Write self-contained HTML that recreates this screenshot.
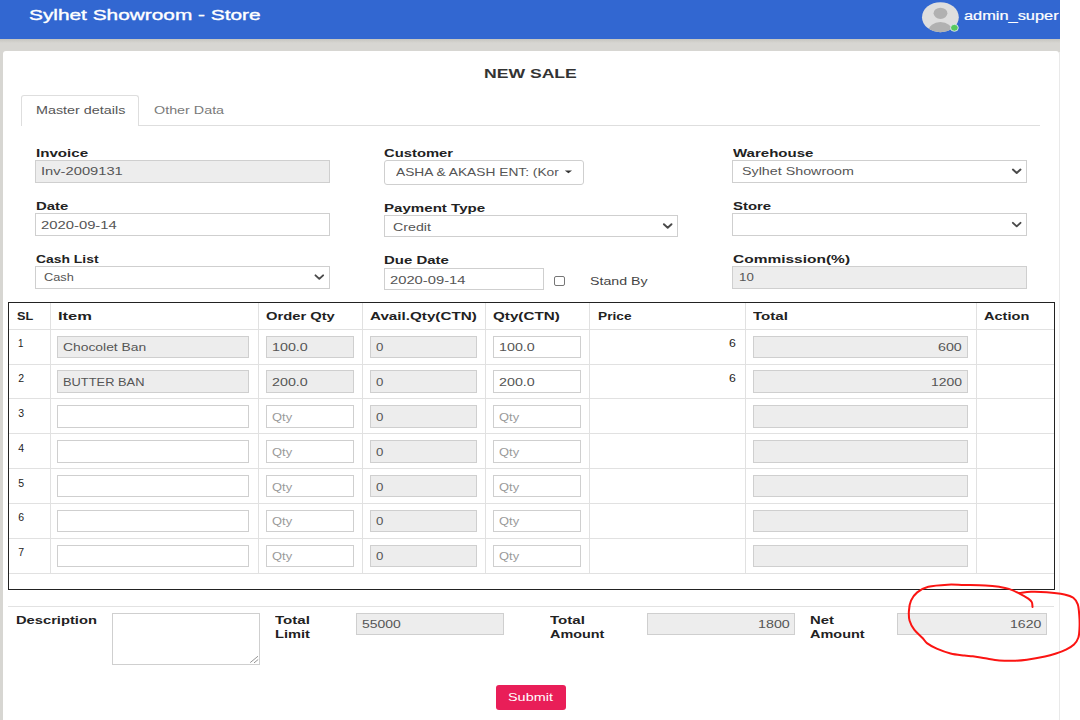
<!DOCTYPE html>
<html lang="en"><head><meta charset="utf-8"><title>New Sale - Sylhet Showroom - Store</title>
<style>
html,body{margin:0;padding:0;}
body{width:1080px;height:720px;position:relative;overflow:hidden;background:#fff;font-family:"Liberation Sans",sans-serif;}
.b{position:absolute;box-sizing:border-box;}
.t{position:absolute;white-space:nowrap;line-height:20px;height:20px;transform-origin:0 0;display:block;}
svg{position:absolute;left:0;top:0;}
</style></head><body>
<div class="b" style="left:0.00px;top:0.00px;width:1060.00px;height:720.00px;background:#d7d6d2;"></div>
<div class="b" style="left:0.00px;top:0.00px;width:1060.00px;height:39.00px;background:#3267d1;"></div>
<div class="b" style="left:0.00px;top:39.00px;width:1060.00px;height:4.00px;background:linear-gradient(#c6c5c0,#d7d6d2);"></div>
<div class="b" style="left:3.00px;top:51.00px;width:1056.00px;height:669.00px;background:#fff;border-radius:3px 3px 0 0;"></div>
<div class="b" style="left:1059.00px;top:52.00px;width:1.00px;height:668.00px;background:#e9e9e9;"></div>
<div class="b" style="left:21.00px;top:125.00px;width:1019.00px;height:1.00px;background:#dedede;"></div>
<div class="b" style="left:21.00px;top:95.00px;width:118.00px;height:31.00px;background:#fff;border:1px solid #dedede;border-bottom:none;border-radius:3px 3px 0 0;"></div>
<div class="b" style="left:35.00px;top:160.00px;width:294.60px;height:23.00px;background:#ededed;border:1px solid #cfcfcf;border-radius:0px;"></div>
<div class="b" style="left:35.00px;top:213.00px;width:294.60px;height:23.00px;background:#fff;border:1px solid #cfcfcf;border-radius:0px;"></div>
<div class="b" style="left:35.00px;top:266.00px;width:294.60px;height:23.00px;background:#fff;border:1px solid #cfcfcf;border-radius:0px;"></div>
<div class="b" style="left:384.00px;top:160.00px;width:200.40px;height:25.00px;background:#fff;border:1px solid #cfcfcf;border-radius:3px;"></div>
<div class="b" style="left:384.00px;top:215.00px;width:293.70px;height:21.70px;background:#fff;border:1px solid #cfcfcf;border-radius:0px;"></div>
<div class="b" style="left:384.00px;top:268.30px;width:160.30px;height:21.70px;background:#fff;border:1px solid #cfcfcf;border-radius:0px;"></div>
<div class="b" style="left:732.30px;top:160.00px;width:294.30px;height:23.00px;background:#fff;border:1px solid #cfcfcf;border-radius:0px;"></div>
<div class="b" style="left:732.30px;top:213.00px;width:294.30px;height:23.00px;background:#fff;border:1px solid #cfcfcf;border-radius:0px;"></div>
<div class="b" style="left:732.30px;top:266.00px;width:294.30px;height:23.00px;background:#ededed;border:1px solid #cfcfcf;border-radius:0px;"></div>
<div class="b" style="left:554.30px;top:276.00px;width:10.40px;height:9.50px;background:#fff;border:1px solid #767676;border-radius:2px;"></div>
<div class="b" style="left:8.00px;top:302.00px;width:1046.50px;height:287.50px;border:1.3px solid #222;"></div>
<div class="b" style="left:9.00px;top:328.70px;width:1044.50px;height:1.00px;background:#e1e1e1;"></div>
<div class="b" style="left:9.00px;top:363.55px;width:1044.50px;height:1.00px;background:#e1e1e1;"></div>
<div class="b" style="left:9.00px;top:398.40px;width:1044.50px;height:1.00px;background:#e1e1e1;"></div>
<div class="b" style="left:9.00px;top:433.25px;width:1044.50px;height:1.00px;background:#e1e1e1;"></div>
<div class="b" style="left:9.00px;top:468.10px;width:1044.50px;height:1.00px;background:#e1e1e1;"></div>
<div class="b" style="left:9.00px;top:502.95px;width:1044.50px;height:1.00px;background:#e1e1e1;"></div>
<div class="b" style="left:9.00px;top:537.80px;width:1044.50px;height:1.00px;background:#e1e1e1;"></div>
<div class="b" style="left:9.00px;top:572.65px;width:1044.50px;height:1.00px;background:#e1e1e1;"></div>
<div class="b" style="left:49.50px;top:303.00px;width:1.00px;height:271.00px;background:#e1e1e1;"></div>
<div class="b" style="left:257.80px;top:303.00px;width:1.00px;height:271.00px;background:#e1e1e1;"></div>
<div class="b" style="left:361.80px;top:303.00px;width:1.00px;height:271.00px;background:#e1e1e1;"></div>
<div class="b" style="left:485.20px;top:303.00px;width:1.00px;height:271.00px;background:#e1e1e1;"></div>
<div class="b" style="left:588.80px;top:303.00px;width:1.00px;height:271.00px;background:#e1e1e1;"></div>
<div class="b" style="left:744.50px;top:303.00px;width:1.00px;height:271.00px;background:#e1e1e1;"></div>
<div class="b" style="left:976.20px;top:303.00px;width:1.00px;height:271.00px;background:#e1e1e1;"></div>
<div class="b" style="left:57.30px;top:335.60px;width:192.00px;height:22.40px;background:#ededed;border:1px solid #cfcfcf;border-radius:0px;"></div>
<div class="b" style="left:266.00px;top:335.60px;width:88.00px;height:22.40px;background:#ededed;border:1px solid #cfcfcf;border-radius:0px;"></div>
<div class="b" style="left:370.00px;top:335.60px;width:106.70px;height:22.40px;background:#ededed;border:1px solid #cfcfcf;border-radius:0px;"></div>
<div class="b" style="left:493.30px;top:335.60px;width:87.40px;height:22.40px;background:#fff;border:1px solid #cfcfcf;border-radius:0px;"></div>
<div class="b" style="left:752.70px;top:335.60px;width:215.00px;height:22.40px;background:#ededed;border:1px solid #cfcfcf;border-radius:0px;"></div>
<div class="b" style="left:57.30px;top:370.45px;width:192.00px;height:22.40px;background:#ededed;border:1px solid #cfcfcf;border-radius:0px;"></div>
<div class="b" style="left:266.00px;top:370.45px;width:88.00px;height:22.40px;background:#ededed;border:1px solid #cfcfcf;border-radius:0px;"></div>
<div class="b" style="left:370.00px;top:370.45px;width:106.70px;height:22.40px;background:#ededed;border:1px solid #cfcfcf;border-radius:0px;"></div>
<div class="b" style="left:493.30px;top:370.45px;width:87.40px;height:22.40px;background:#fff;border:1px solid #cfcfcf;border-radius:0px;"></div>
<div class="b" style="left:752.70px;top:370.45px;width:215.00px;height:22.40px;background:#ededed;border:1px solid #cfcfcf;border-radius:0px;"></div>
<div class="b" style="left:57.30px;top:405.30px;width:192.00px;height:22.40px;background:#fff;border:1px solid #cfcfcf;border-radius:0px;"></div>
<div class="b" style="left:266.00px;top:405.30px;width:88.00px;height:22.40px;background:#fff;border:1px solid #cfcfcf;border-radius:0px;"></div>
<div class="b" style="left:370.00px;top:405.30px;width:106.70px;height:22.40px;background:#ededed;border:1px solid #cfcfcf;border-radius:0px;"></div>
<div class="b" style="left:493.30px;top:405.30px;width:87.40px;height:22.40px;background:#fff;border:1px solid #cfcfcf;border-radius:0px;"></div>
<div class="b" style="left:752.70px;top:405.30px;width:215.00px;height:22.40px;background:#ededed;border:1px solid #cfcfcf;border-radius:0px;"></div>
<div class="b" style="left:57.30px;top:440.15px;width:192.00px;height:22.40px;background:#fff;border:1px solid #cfcfcf;border-radius:0px;"></div>
<div class="b" style="left:266.00px;top:440.15px;width:88.00px;height:22.40px;background:#fff;border:1px solid #cfcfcf;border-radius:0px;"></div>
<div class="b" style="left:370.00px;top:440.15px;width:106.70px;height:22.40px;background:#ededed;border:1px solid #cfcfcf;border-radius:0px;"></div>
<div class="b" style="left:493.30px;top:440.15px;width:87.40px;height:22.40px;background:#fff;border:1px solid #cfcfcf;border-radius:0px;"></div>
<div class="b" style="left:752.70px;top:440.15px;width:215.00px;height:22.40px;background:#ededed;border:1px solid #cfcfcf;border-radius:0px;"></div>
<div class="b" style="left:57.30px;top:475.00px;width:192.00px;height:22.40px;background:#fff;border:1px solid #cfcfcf;border-radius:0px;"></div>
<div class="b" style="left:266.00px;top:475.00px;width:88.00px;height:22.40px;background:#fff;border:1px solid #cfcfcf;border-radius:0px;"></div>
<div class="b" style="left:370.00px;top:475.00px;width:106.70px;height:22.40px;background:#ededed;border:1px solid #cfcfcf;border-radius:0px;"></div>
<div class="b" style="left:493.30px;top:475.00px;width:87.40px;height:22.40px;background:#fff;border:1px solid #cfcfcf;border-radius:0px;"></div>
<div class="b" style="left:752.70px;top:475.00px;width:215.00px;height:22.40px;background:#ededed;border:1px solid #cfcfcf;border-radius:0px;"></div>
<div class="b" style="left:57.30px;top:509.85px;width:192.00px;height:22.40px;background:#fff;border:1px solid #cfcfcf;border-radius:0px;"></div>
<div class="b" style="left:266.00px;top:509.85px;width:88.00px;height:22.40px;background:#fff;border:1px solid #cfcfcf;border-radius:0px;"></div>
<div class="b" style="left:370.00px;top:509.85px;width:106.70px;height:22.40px;background:#ededed;border:1px solid #cfcfcf;border-radius:0px;"></div>
<div class="b" style="left:493.30px;top:509.85px;width:87.40px;height:22.40px;background:#fff;border:1px solid #cfcfcf;border-radius:0px;"></div>
<div class="b" style="left:752.70px;top:509.85px;width:215.00px;height:22.40px;background:#ededed;border:1px solid #cfcfcf;border-radius:0px;"></div>
<div class="b" style="left:57.30px;top:544.70px;width:192.00px;height:22.40px;background:#fff;border:1px solid #cfcfcf;border-radius:0px;"></div>
<div class="b" style="left:266.00px;top:544.70px;width:88.00px;height:22.40px;background:#fff;border:1px solid #cfcfcf;border-radius:0px;"></div>
<div class="b" style="left:370.00px;top:544.70px;width:106.70px;height:22.40px;background:#ededed;border:1px solid #cfcfcf;border-radius:0px;"></div>
<div class="b" style="left:493.30px;top:544.70px;width:87.40px;height:22.40px;background:#fff;border:1px solid #cfcfcf;border-radius:0px;"></div>
<div class="b" style="left:752.70px;top:544.70px;width:215.00px;height:22.40px;background:#ededed;border:1px solid #cfcfcf;border-radius:0px;"></div>
<div class="b" style="left:8.00px;top:606.00px;width:1046.00px;height:1.00px;background:#e2e2e2;"></div>
<div class="b" style="left:112.30px;top:613.30px;width:147.70px;height:51.30px;background:#fff;border:1px solid #cfcfcf;border-radius:0px;"></div>
<div class="b" style="left:355.70px;top:613.30px;width:148.30px;height:21.70px;background:#ededed;border:1px solid #cfcfcf;border-radius:0px;"></div>
<div class="b" style="left:646.60px;top:613.30px;width:148.20px;height:21.70px;background:#ededed;border:1px solid #cfcfcf;border-radius:0px;"></div>
<div class="b" style="left:897.20px;top:613.30px;width:149.80px;height:21.70px;background:#ededed;border:1px solid #cfcfcf;border-radius:0px;"></div>
<div class="b" style="left:496.00px;top:685.00px;width:69.70px;height:25.00px;background:#e91e58;border-radius:3px;"></div>
<span class="t" style="left:29.00px;top:4.78px;font-size:14.5px;font-weight:400;color:#fff;transform:scaleX(1.4369);-webkit-text-stroke:0.35px #fff;">Sylhet Showroom - Store</span>
<span class="t" style="left:963.80px;top:6.34px;font-size:12px;font-weight:400;color:#fff;transform:scaleX(1.3637);-webkit-text-stroke:0.2px #fff;">admin_super</span>
<span class="t" style="left:484.40px;top:63.90px;font-size:13px;font-weight:700;color:#333;transform:scaleX(1.3533);">NEW SALE</span>
<span class="t" style="left:36.00px;top:100.36px;font-size:10.5px;font-weight:400;color:#555;transform:scaleX(1.3670);">Master details</span>
<span class="t" style="left:154.40px;top:100.36px;font-size:10.5px;font-weight:400;color:#7a7a7a;transform:scaleX(1.3646);">Other Data</span>
<span class="t" style="left:35.80px;top:143.06px;font-size:10.5px;font-weight:700;color:#222;transform:scaleX(1.4419);">Invoice</span>
<span class="t" style="left:35.80px;top:196.36px;font-size:10.5px;font-weight:700;color:#222;transform:scaleX(1.4180);">Date</span>
<span class="t" style="left:35.80px;top:249.06px;font-size:10.5px;font-weight:700;color:#222;transform:scaleX(1.3232);">Cash List</span>
<span class="t" style="left:384.30px;top:143.06px;font-size:10.5px;font-weight:700;color:#222;transform:scaleX(1.4104);">Customer</span>
<span class="t" style="left:384.30px;top:198.06px;font-size:10.5px;font-weight:700;color:#222;transform:scaleX(1.4368);">Payment Type</span>
<span class="t" style="left:384.30px;top:250.36px;font-size:10.5px;font-weight:700;color:#222;transform:scaleX(1.4232);">Due Date</span>
<span class="t" style="left:732.70px;top:143.06px;font-size:10.5px;font-weight:700;color:#222;transform:scaleX(1.4299);">Warehouse</span>
<span class="t" style="left:732.70px;top:196.36px;font-size:10.5px;font-weight:700;color:#222;transform:scaleX(1.4185);">Store</span>
<span class="t" style="left:732.70px;top:249.06px;font-size:10.5px;font-weight:700;color:#222;transform:scaleX(1.4751);">Commission(%)</span>
<span class="t" style="left:41.20px;top:161.36px;font-size:10.5px;font-weight:400;color:#555;transform:scaleX(1.4007);">Inv-2009131</span>
<span class="t" style="left:40.70px;top:214.66px;font-size:10.5px;font-weight:400;color:#555;transform:scaleX(1.4108);">2020-09-14</span>
<span class="t" style="left:44.00px;top:267.06px;font-size:10.5px;font-weight:400;color:#555;transform:scaleX(1.2159);">Cash</span>
<span class="t" style="left:396.00px;top:162.06px;font-size:10.5px;font-weight:400;color:#555;transform:scaleX(1.3100);">ASHA &amp; AKASH ENT: (Kor</span>
<span class="t" style="left:392.70px;top:217.06px;font-size:10.5px;font-weight:400;color:#555;transform:scaleX(1.3527);">Credit</span>
<span class="t" style="left:390.00px;top:270.36px;font-size:10.5px;font-weight:400;color:#555;transform:scaleX(1.4052);">2020-09-14</span>
<span class="t" style="left:589.80px;top:271.36px;font-size:10.5px;font-weight:400;color:#444;transform:scaleX(1.3492);">Stand By</span>
<span class="t" style="left:741.70px;top:161.36px;font-size:10.5px;font-weight:400;color:#555;transform:scaleX(1.3605);">Sylhet Showroom</span>
<span class="t" style="left:739.30px;top:267.06px;font-size:10.5px;font-weight:400;color:#555;transform:scaleX(1.2669);">10</span>
<span class="t" style="left:17.20px;top:306.36px;font-size:10.5px;font-weight:700;color:#222;transform:scaleX(1.2068);">SL</span>
<span class="t" style="left:58.30px;top:306.36px;font-size:10.5px;font-weight:700;color:#222;transform:scaleX(1.5715);">Item</span>
<span class="t" style="left:266.00px;top:306.36px;font-size:10.5px;font-weight:700;color:#222;transform:scaleX(1.4032);">Order Qty</span>
<span class="t" style="left:370.00px;top:306.36px;font-size:10.5px;font-weight:700;color:#222;transform:scaleX(1.4480);">Avail.Qty(CTN)</span>
<span class="t" style="left:493.30px;top:306.36px;font-size:10.5px;font-weight:700;color:#222;transform:scaleX(1.4480);">Qty(CTN)</span>
<span class="t" style="left:597.80px;top:306.36px;font-size:10.5px;font-weight:700;color:#222;transform:scaleX(1.3039);">Price</span>
<span class="t" style="left:752.70px;top:306.36px;font-size:10.5px;font-weight:700;color:#222;transform:scaleX(1.4353);">Total</span>
<span class="t" style="left:984.30px;top:306.36px;font-size:10.5px;font-weight:700;color:#222;transform:scaleX(1.3860);">Action</span>
<span class="t" style="left:18.30px;top:333.16px;font-size:10.5px;font-weight:400;color:#222;transform:scaleX(0.9333);">1</span>
<span class="t" style="left:63.30px;top:337.16px;font-size:10.5px;font-weight:400;color:#555;transform:scaleX(1.3196);">Chocolet Ban</span>
<span class="t" style="left:271.70px;top:337.16px;font-size:10.5px;font-weight:400;color:#555;transform:scaleX(1.3618);">100.0</span>
<span class="t" style="left:499.00px;top:337.16px;font-size:10.5px;font-weight:400;color:#555;transform:scaleX(1.3618);">100.0</span>
<span class="t" style="left:729.00px;top:333.16px;font-size:10.5px;font-weight:400;color:#222;transform:scaleX(1.1667);">6</span>
<span class="t" style="left:938.30px;top:337.16px;font-size:10.5px;font-weight:400;color:#555;transform:scaleX(1.3575);">600</span>
<span class="t" style="left:375.70px;top:337.16px;font-size:10.5px;font-weight:400;color:#555;transform:scaleX(1.2667);">0</span>
<span class="t" style="left:18.30px;top:368.01px;font-size:10.5px;font-weight:400;color:#222;transform:scaleX(1.0000);">2</span>
<span class="t" style="left:63.30px;top:372.01px;font-size:10.5px;font-weight:400;color:#555;transform:scaleX(1.2241);">BUTTER BAN</span>
<span class="t" style="left:271.70px;top:372.01px;font-size:10.5px;font-weight:400;color:#555;transform:scaleX(1.3618);">200.0</span>
<span class="t" style="left:499.00px;top:372.01px;font-size:10.5px;font-weight:400;color:#555;transform:scaleX(1.3618);">200.0</span>
<span class="t" style="left:729.00px;top:368.01px;font-size:10.5px;font-weight:400;color:#222;transform:scaleX(1.1667);">6</span>
<span class="t" style="left:931.00px;top:372.01px;font-size:10.5px;font-weight:400;color:#555;transform:scaleX(1.3309);">1200</span>
<span class="t" style="left:375.70px;top:372.01px;font-size:10.5px;font-weight:400;color:#555;transform:scaleX(1.2667);">0</span>
<span class="t" style="left:18.30px;top:402.86px;font-size:10.5px;font-weight:400;color:#222;transform:scaleX(1.0000);">3</span>
<span class="t" style="left:271.70px;top:406.86px;font-size:10.5px;font-weight:400;color:#9a9a9a;transform:scaleX(1.2292);">Qty</span>
<span class="t" style="left:499.00px;top:406.86px;font-size:10.5px;font-weight:400;color:#9a9a9a;transform:scaleX(1.2292);">Qty</span>
<span class="t" style="left:375.70px;top:406.86px;font-size:10.5px;font-weight:400;color:#555;transform:scaleX(1.2667);">0</span>
<span class="t" style="left:18.30px;top:437.71px;font-size:10.5px;font-weight:400;color:#222;transform:scaleX(1.0000);">4</span>
<span class="t" style="left:271.70px;top:441.71px;font-size:10.5px;font-weight:400;color:#9a9a9a;transform:scaleX(1.2292);">Qty</span>
<span class="t" style="left:499.00px;top:441.71px;font-size:10.5px;font-weight:400;color:#9a9a9a;transform:scaleX(1.2292);">Qty</span>
<span class="t" style="left:375.70px;top:441.71px;font-size:10.5px;font-weight:400;color:#555;transform:scaleX(1.2667);">0</span>
<span class="t" style="left:18.30px;top:472.56px;font-size:10.5px;font-weight:400;color:#222;transform:scaleX(1.0000);">5</span>
<span class="t" style="left:271.70px;top:476.56px;font-size:10.5px;font-weight:400;color:#9a9a9a;transform:scaleX(1.2292);">Qty</span>
<span class="t" style="left:499.00px;top:476.56px;font-size:10.5px;font-weight:400;color:#9a9a9a;transform:scaleX(1.2292);">Qty</span>
<span class="t" style="left:375.70px;top:476.56px;font-size:10.5px;font-weight:400;color:#555;transform:scaleX(1.2667);">0</span>
<span class="t" style="left:18.30px;top:507.41px;font-size:10.5px;font-weight:400;color:#222;transform:scaleX(1.0000);">6</span>
<span class="t" style="left:271.70px;top:511.41px;font-size:10.5px;font-weight:400;color:#9a9a9a;transform:scaleX(1.2292);">Qty</span>
<span class="t" style="left:499.00px;top:511.41px;font-size:10.5px;font-weight:400;color:#9a9a9a;transform:scaleX(1.2292);">Qty</span>
<span class="t" style="left:375.70px;top:511.41px;font-size:10.5px;font-weight:400;color:#555;transform:scaleX(1.2667);">0</span>
<span class="t" style="left:18.30px;top:542.26px;font-size:10.5px;font-weight:400;color:#222;transform:scaleX(1.0000);">7</span>
<span class="t" style="left:271.70px;top:546.26px;font-size:10.5px;font-weight:400;color:#9a9a9a;transform:scaleX(1.2292);">Qty</span>
<span class="t" style="left:499.00px;top:546.26px;font-size:10.5px;font-weight:400;color:#9a9a9a;transform:scaleX(1.2292);">Qty</span>
<span class="t" style="left:375.70px;top:546.26px;font-size:10.5px;font-weight:400;color:#555;transform:scaleX(1.2667);">0</span>
<span class="t" style="left:15.70px;top:609.66px;font-size:10.5px;font-weight:700;color:#222;transform:scaleX(1.4003);">Description</span>
<span class="t" style="left:275.00px;top:609.66px;font-size:10.5px;font-weight:700;color:#222;transform:scaleX(1.4353);">Total</span>
<span class="t" style="left:275.00px;top:624.06px;font-size:10.5px;font-weight:700;color:#222;transform:scaleX(1.3954);">Limit</span>
<span class="t" style="left:361.70px;top:613.66px;font-size:10.5px;font-weight:400;color:#555;transform:scaleX(1.3284);">55000</span>
<span class="t" style="left:550.00px;top:609.66px;font-size:10.5px;font-weight:700;color:#222;transform:scaleX(1.4353);">Total</span>
<span class="t" style="left:550.00px;top:624.06px;font-size:10.5px;font-weight:700;color:#222;transform:scaleX(1.3695);">Amount</span>
<span class="t" style="left:758.40px;top:613.66px;font-size:10.5px;font-weight:400;color:#555;transform:scaleX(1.3606);">1800</span>
<span class="t" style="left:810.40px;top:609.66px;font-size:10.5px;font-weight:700;color:#222;transform:scaleX(1.4120);">Net</span>
<span class="t" style="left:810.40px;top:624.06px;font-size:10.5px;font-weight:700;color:#222;transform:scaleX(1.3770);">Amount</span>
<span class="t" style="left:1010.00px;top:614.06px;font-size:10.5px;font-weight:400;color:#555;transform:scaleX(1.3394);">1620</span>
<span class="t" style="left:508.30px;top:687.06px;font-size:10.5px;font-weight:400;color:#fff;transform:scaleX(1.3735);">Submit</span>
<div class="b" style="left:561.00px;top:164.00px;width:3.20px;height:17.00px;background:#fff;"></div>
<div class="b" style="left:1060.00px;top:0.00px;width:20.00px;height:720.00px;background:#fff;"></div>
<svg width="1080" height="720" viewBox="0 0 1080 720">
<defs><clipPath id="av"><ellipse cx="940.4" cy="17.2" rx="18.4" ry="15"/></clipPath></defs>
<ellipse cx="940.4" cy="17.2" rx="18.4" ry="15" fill="#dedede"/>
<g clip-path="url(#av)" fill="#b1b1b1"><ellipse cx="940.5" cy="13.3" rx="6.9" ry="5.6"/><ellipse cx="940.4" cy="31.3" rx="12" ry="9.4"/></g>
<ellipse cx="954.4" cy="27.8" rx="3.9" ry="3.5" fill="#56c95e" stroke="#e4e8f0" stroke-width="0.9"/>
<path d="M315.50 275.35 L319.30 278.85 L323.10 275.35" fill="none" stroke="#4a4a4a" stroke-width="1.95" stroke-linecap="round" stroke-linejoin="round"/>
<path d="M663.90 224.25 L667.70 227.75 L671.50 224.25" fill="none" stroke="#4a4a4a" stroke-width="1.95" stroke-linecap="round" stroke-linejoin="round"/>
<path d="M1012.90 169.55 L1016.70 173.05 L1020.50 169.55" fill="none" stroke="#4a4a4a" stroke-width="1.95" stroke-linecap="round" stroke-linejoin="round"/>
<path d="M1012.90 222.85 L1016.70 226.35 L1020.50 222.85" fill="none" stroke="#4a4a4a" stroke-width="1.95" stroke-linecap="round" stroke-linejoin="round"/>
<path d="M564.8 170.4 L572 170.4 L568.4 173.3 Z" fill="#333"/>
<path d="M250.2 662.6 L258 656.2 M254 662.9 L258.2 659.5" stroke="#8a8a8a" stroke-width="0.9" fill="none"/>
<path d="M1032.5 607.0 C1032.4 606.2 1032.5 603.5 1031.8 602.1 C1031.1 600.7 1030.3 600.0 1028.3 598.6 C1026.3 597.2 1023.2 595.4 1020.0 593.8 C1016.8 592.1 1012.4 590.1 1008.9 588.9 C1005.4 587.7 1003.1 587.4 999.2 586.8 C995.3 586.2 991.1 585.7 985.3 585.4 C979.5 585.1 970.6 585.1 964.4 585.0 C958.1 584.9 953.8 584.4 947.8 584.7 C941.8 585.0 933.4 585.5 928.3 586.8 C923.2 588.1 920.1 590.1 917.2 592.4 C914.3 594.7 912.4 597.6 911.0 600.7 C909.6 603.8 909.1 607.8 908.9 611.1 C908.7 614.5 908.7 617.7 909.6 620.8 C910.5 623.9 912.2 627.0 914.4 629.9 C916.6 632.8 920.7 636.0 922.8 638.2 C924.9 640.4 924.6 641.4 926.9 643.1 C929.2 644.8 932.8 646.9 936.7 648.6 C940.7 650.3 946.0 652.3 950.6 653.5 C955.2 654.7 960.7 655.1 964.4 655.6 C968.1 656.1 969.3 655.8 972.8 656.3 C976.3 656.8 980.9 657.6 985.3 658.3 C989.7 659.0 994.6 660.0 999.2 660.4 C1003.8 660.8 1008.5 660.9 1013.1 660.8 C1017.7 660.7 1021.6 660.4 1026.9 659.7 C1032.2 659.0 1040.2 657.6 1045.0 656.6 C1049.8 655.6 1052.5 654.7 1056.0 653.5 C1059.5 652.3 1063.0 651.1 1066.0 649.6 C1069.0 648.1 1071.9 646.5 1074.0 644.5 C1076.1 642.5 1077.5 640.2 1078.4 637.5 C1079.3 634.8 1079.3 631.6 1079.5 628.0 C1079.7 624.4 1079.6 619.5 1079.3 615.6 C1079.0 611.7 1078.8 607.4 1077.8 604.4 C1076.8 601.4 1075.5 599.5 1073.3 597.8 C1071.1 596.1 1068.8 595.3 1064.4 594.4 C1060.0 593.5 1052.2 592.6 1046.7 592.2 C1041.2 591.8 1035.5 591.7 1031.1 591.8 C1026.6 591.9 1021.9 592.7 1020.0 592.9" fill="none" stroke="#fb1412" stroke-width="2" stroke-linecap="round" stroke-linejoin="round"/>
</svg>
</body></html>
